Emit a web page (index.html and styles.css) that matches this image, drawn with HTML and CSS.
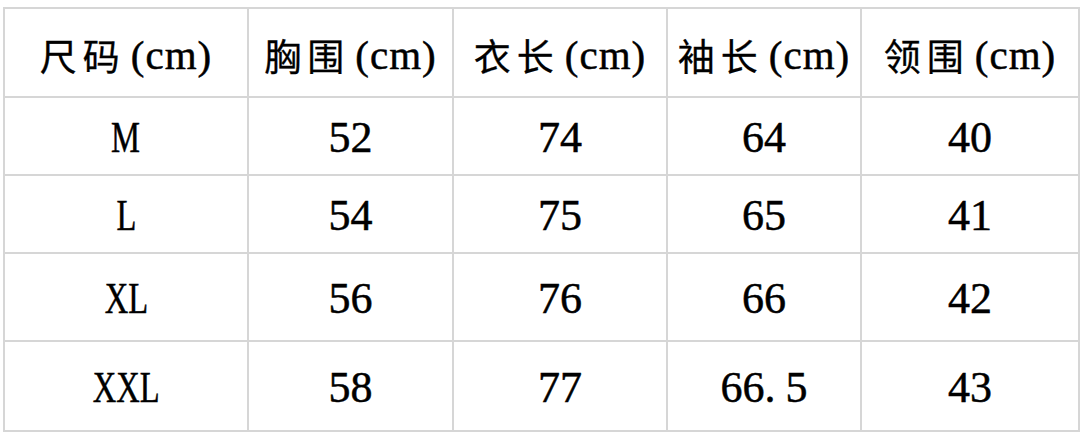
FILE: index.html
```html
<!DOCTYPE html>
<html lang="zh">
<head>
<meta charset="utf-8">
<title>尺码表</title>
<link rel="stylesheet" href="styles.css">
</head>
<body>
<div class="sheet">
  <div class="cell head"><span class="zh">尺码</span><span class="unit">(cm)</span></div>
  <div class="cell head"><span class="zh">胸围</span><span class="unit">(cm)</span></div>
  <div class="cell head"><span class="zh">衣长</span><span class="unit">(cm)</span></div>
  <div class="cell head"><span class="zh">袖长</span><span class="unit">(cm)</span></div>
  <div class="cell head"><span class="zh">领围</span><span class="unit">(cm)</span></div>

  <div class="cell"><span class="size">M</span></div>
  <div class="cell">52</div>
  <div class="cell">74</div>
  <div class="cell">64</div>
  <div class="cell">40</div>

  <div class="cell"><span class="size">L</span></div>
  <div class="cell">54</div>
  <div class="cell">75</div>
  <div class="cell">65</div>
  <div class="cell">41</div>

  <div class="cell"><span class="size">XL</span></div>
  <div class="cell">56</div>
  <div class="cell">76</div>
  <div class="cell">66</div>
  <div class="cell">42</div>

  <div class="cell"><span class="size">XXL</span></div>
  <div class="cell">58</div>
  <div class="cell">77</div>
  <div class="cell">66<span class="dot">.</span>5</div>
  <div class="cell">43</div>
</div>
</body>
</html>
```
FILE: styles.css
```css
html, body {
  margin: 0;
  padding: 0;
  background: #ffffff;
}
body {
  width: 1080px;
  height: 432px;
  overflow: hidden;
}
.sheet {
  margin: 7px 0 0 3px;
  display: grid;
  grid-template-columns: 242px 203px 212px 192px 216px;
  grid-template-rows: 87px 76px 76px 86px 88px;
  gap: 2px;
  padding: 2px;
  background: #d6d6d6;
  width: max-content;
}
.cell {
  background: #ffffff;
  display: flex;
  align-items: center;
  justify-content: center;
  font-family: "Liberation Serif", "Noto Sans CJK SC", serif;
  font-size: 44px;
  color: #000000;
  line-height: 1;
  padding-top: 4px;
  box-sizing: border-box;
  -webkit-text-stroke: 0.5px #000000;
}
.size {
  display: inline-block;
  font-size: 44px;
  transform: scaleX(0.74);
}
.head {
  padding-top: 6px;
}
.zh {
  font-family: "Noto Sans CJK SC", sans-serif;
  font-size: 37px;
  letter-spacing: 6px;
  font-weight: 400;
  -webkit-text-stroke: 0.3px #000000;
}
.unit {
  font-family: "Liberation Serif", serif;
  font-size: 41px;
  letter-spacing: 1px;
  margin-left: 5px;
}
.dot {
  margin-right: 10px;
}
```
